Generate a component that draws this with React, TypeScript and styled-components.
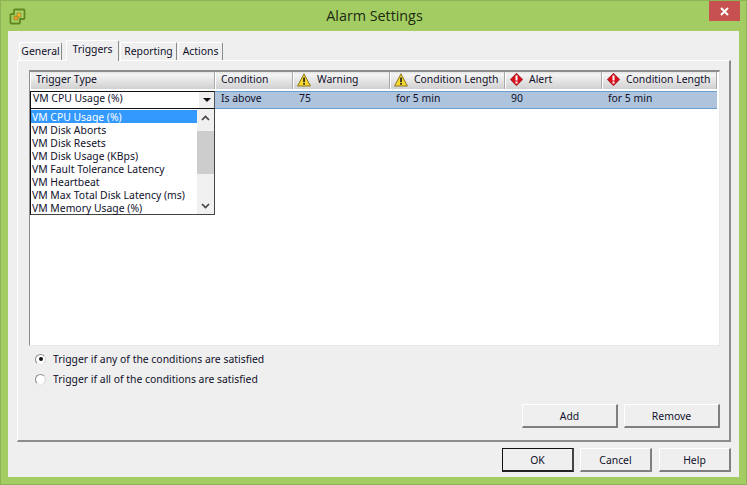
import React from 'react';
import styled, { createGlobalStyle } from 'styled-components';

const GlobalStyle = createGlobalStyle`
    html, body {
        margin: 0;
        padding: 0;
        background: #a3cd62;
    }
    * {
        box-sizing: border-box;
    }
`;

const triggerTypes = [
    'VM CPU Usage (%)',
    'VM Disk Aborts',
    'VM Disk Resets',
    'VM Disk Usage (KBps)',
    'VM Fault Tolerance Latency',
    'VM Heartbeat',
    'VM Max Total Disk Latency (ms)',
    'VM Memory Usage (%)',
];

const columns = [
    { label: 'Trigger Type', width: 185, value: '', icon: null },
    { label: 'Condition', width: 78, value: 'Is above', icon: null },
    { label: 'Warning', width: 97, value: '75', icon: 'warn' },
    { label: 'Condition Length', width: 115, value: 'for 5 min', icon: 'warn' },
    { label: 'Alert', width: 97, value: '90', icon: 'alert' },
    { label: 'Condition Length', width: 115, value: 'for 5 min', icon: 'alert' },
];

const AppLogo = () => (
    <svg width="17" height="17" viewBox="0 0 17 17">
        <path d="M6 1.500h8.500a1 1 0 0 1 1 1V10a1 1 0 0 1-1 1H11v3.500a1 1 0 0 1-1 1H2.500a1 1 0 0 1-1-1V7a1 1 0 0 1 1-1H5V2.500a1 1 0 0 1 1-1z" fill="#a9d268" stroke="#5f8a22" strokeWidth="1.800" />
        <rect x="5" y="8" width="4" height="4" fill="#e8a020" stroke="#8a7a20" strokeWidth="0.600" />
        <rect x="8" y="5" width="4" height="4" fill="#f0b030" stroke="#8a7a20" strokeWidth="0.600" />
    </svg>
);

const WarnIcon = () => (
    <svg width="14" height="14" viewBox="0 0 14 14">
        <path d="M7 0.800 13.400 13H0.600z" fill="#f6d92e" stroke="#8a7420" strokeWidth="1" strokeLinejoin="round" />
        <rect x="6.200" y="4.500" width="1.700" height="4.700" fill="#222" />
        <rect x="6.200" y="10" width="1.700" height="1.700" fill="#222" />
    </svg>
);

const AlertIcon = () => (
    <svg width="13" height="13" viewBox="0 0 13 13">
        <path d="M6.500 0.300 12.700 6.500 6.500 12.700 0.300 6.500z" fill="#d8101c" stroke="#900810" strokeWidth="0.700" />
        <rect x="5.500" y="2.500" width="2" height="5" fill="#fff" />
        <rect x="5.500" y="8.500" width="2" height="2" fill="#fff" />
    </svg>
);

const Chevron = ({ up }: { up?: boolean }) => (
    <svg width="9" height="6" viewBox="0 0 9 6">
        <path d={up ? 'M1 5 4.500 1.500 8 5' : 'M1 1 4.500 4.500 8 1'} fill="none" stroke="#444" strokeWidth="1.700" />
    </svg>
);

const App: React.FC = () => {
    return (
        <Window>
            <GlobalStyle />
            <TitleBar>
                <LogoSlot>
                    <AppLogo />
                </LogoSlot>
                <Title>Alarm Settings</Title>
                <CloseButton>
                    <svg width="9" height="9" viewBox="0 0 9 9">
                        <path d="M1 1 8 8M8 1 1 8" stroke="#fff" strokeWidth="2" />
                    </svg>
                </CloseButton>
            </TitleBar>
            <Client>
                <TabStrip>
                    <Tab $width={43}>General</Tab>
                    <Tab $width={53} $active>Triggers</Tab>
                    <Tab $width={57}>Reporting</Tab>
                    <Tab $width={45}>Actions</Tab>
                </TabStrip>
                <TabPanel>
                    <TableFrame>
                        <HeaderRow>
                            {columns.map((col, i) => (
                                <HeaderCell key={i} $width={col.width} $icon={col.icon}>
                                    {col.icon === 'warn' && <WarnIcon />}
                                    {col.icon === 'alert' && <AlertIcon />}
                                    <HeaderLabel $hasIcon={!!col.icon}>{col.label}</HeaderLabel>
                                </HeaderCell>
                            ))}
                        </HeaderRow>
                        <DataRow>
                            <Combo>
                                <ComboText>VM CPU Usage (%)</ComboText>
                                <ComboArrow />
                            </Combo>
                            {columns.slice(1).map((col, i) => (
                                <DataCell key={i} $width={col.width}>{col.value}</DataCell>
                            ))}
                        </DataRow>
                        <Dropdown>
                            <ItemList>
                                {triggerTypes.map((item, i) => (
                                    <Item key={item} $selected={i === 0}>{item}</Item>
                                ))}
                            </ItemList>
                            <ScrollBar>
                                <ScrollEnd><Chevron up /></ScrollEnd>
                                <ScrollTrack>
                                    <ScrollThumb />
                                </ScrollTrack>
                                <ScrollEnd><Chevron /></ScrollEnd>
                            </ScrollBar>
                        </Dropdown>
                    </TableFrame>
                    <RadioGroup>
                        <RadioRow>
                            <Radio $checked />
                            <RadioLabel>Trigger if any of the conditions are satisfied</RadioLabel>
                        </RadioRow>
                        <RadioRow>
                            <Radio />
                            <RadioLabel>Trigger if all of the conditions are satisfied</RadioLabel>
                        </RadioRow>
                    </RadioGroup>
                    <PanelButtons>
                        <DialogButton $width={96}>Add</DialogButton>
                        <DialogButton $width={96}>Remove</DialogButton>
                    </PanelButtons>
                </TabPanel>
                <DialogButtons>
                    <DialogButton $width={72} $default>OK</DialogButton>
                    <DialogButton $width={72}>Cancel</DialogButton>
                    <DialogButton $width={72}>Help</DialogButton>
                </DialogButtons>
            </Client>
        </Window>
    );
};

export default App;

const uiFont = `"Noto Sans", "DejaVu Sans", sans-serif`;

const Window = styled.div`
    width: 747px;
    height: 485px;
    background: #a3cd62;
    border: 1px solid #8eb356;
    padding: 0 7px 7px;
    display: flex;
    flex-direction: column;
    font-family: ${uiFont};
    font-size: 10.400px;
    color: #10102a;
    overflow: hidden;
`;

const TitleBar = styled.div`
    height: 30px;
    flex-shrink: 0;
    display: flex;
    align-items: flex-start;
    justify-content: space-between;
`;

const LogoSlot = styled.div`
    padding: 7px 0 0 1px;
    display: flex;
`;

const Title = styled.div`
    flex: 1;
    text-align: center;
    padding: 5px 0 0 14px;
    font-family: "Open Sans", "Noto Sans", sans-serif;
    font-size: 14.300px;
    color: #1c2a10;
`;

const CloseButton = styled.div`
    width: 31px;
    height: 20px;
    margin-right: -1px;
    background: #c75050;
    display: flex;
    align-items: center;
    justify-content: center;
`;

const Client = styled.div`
    flex: 1;
    background: #efefef;
    padding: 9px 8px 5px 9px;
    display: flex;
    flex-direction: column;
`;

const TabStrip = styled.div`
    height: 20px;
    display: flex;
    align-items: flex-end;
    padding-left: 2px;
    flex-shrink: 0;
    position: relative;
    z-index: 1;
`;

const Tab = styled.div<{ $width: number; $active?: boolean }>`
    width: ${(p) => p.$width}px;
    height: ${(p) => (p.$active ? 21 : 18)}px;
    margin: ${(p) => (p.$active ? '0 1px 0 3px' : '0 1px 0 0')};
    margin-bottom: ${(p) => (p.$active ? -1 : 0)}px;
    background: #efefef;
    border-top: 1px solid #fff;
    border-left: 1px solid #fff;
    border-right: 1px solid #8a8a8a;
    border-radius: 2px 2px 0 0;
    display: flex;
    align-items: center;
    justify-content: center;
    padding-bottom: ${(p) => (p.$active ? 5 : 2)}px;
`;

const TabPanel = styled.div`
    height: 382px;
    flex-shrink: 0;
    border-top: 1px solid #fff;
    border-left: 1px solid #fff;
    border-right: 2px solid #8c8c8c;
    border-bottom: 2px solid #8c8c8c;
    padding: 9px 9px 0 11px;
    display: flex;
    flex-direction: column;
`;

const TableFrame = styled.div`
    height: 276px;
    flex-shrink: 0;
    background: #fff;
    border-top: 2px solid #8d8d8d;
    border-left: 1px solid #8d8d8d;
    border-right: 1px solid #e8e8e8;
    border-bottom: 1px solid #e8e8e8;
    position: relative;
`;

const HeaderRow = styled.div`
    height: 17px;
    display: flex;
    width: 687px;
`;

const headerPadding = (icon: string | null) => (icon === 'warn' ? 3 : icon === 'alert' ? 4 : 5);

const HeaderCell = styled.div<{ $width: number; $icon: string | null }>`
    width: ${(p) => p.$width}px;
    flex-shrink: 0;
    display: flex;
    align-items: center;
    padding-left: ${(p) => headerPadding(p.$icon)}px;
    background: linear-gradient(#e4e4e4, #f4f4f4 15%, #d0d0d0);
    border-right: 1px solid #a8a8a8;
    border-left: 1px solid #fff;
    white-space: nowrap;
    overflow: hidden;

    svg {
        flex-shrink: 0;
        margin-bottom: 2px;
    }
`;

const HeaderLabel = styled.span<{ $hasIcon: boolean }>`
    margin-left: ${(p) => (p.$hasIcon ? 6 : 0)}px;
    padding-bottom: 4px;
`;

const DataRow = styled.div`
    margin-top: 2px;
    height: 18px;
    width: 687px;
    display: flex;
    background: #aec4dd;
    border-top: 1px solid #6a9fcf;
    border-bottom: 1px solid #6a9fcf;
    align-items: center;
`;

const Combo = styled.div`
    width: 185px;
    height: 18px;
    flex-shrink: 0;
    background: #fff;
    border: 1px solid #111;
    border-right: 1px solid #555;
    display: flex;
    align-items: center;
`;

const ComboText = styled.span`
    flex: 1;
    padding-left: 2px;
    padding-bottom: 5px;
`;

const ComboArrow = styled.span`
    width: 15px;
    height: 100%;
    background: #efefef;
    display: flex;
    align-items: center;
    justify-content: center;

    &::after {
        content: '';
        border-left: 4px solid transparent;
        border-right: 4px solid transparent;
        border-top: 4px solid #111;
    }
`;

const DataCell = styled.div<{ $width: number }>`
    width: ${(p) => p.$width}px;
    flex-shrink: 0;
    padding-left: 6px;
    padding-bottom: 4px;
    white-space: nowrap;
`;

const Dropdown = styled.div`
    position: absolute;
    left: 0;
    top: 36px;
    width: 185px;
    height: 107px;
    background: #fff;
    border: 1px solid #111;
    border-right-color: #444;
    border-bottom-color: #444;
    display: flex;
`;

const ItemList = styled.div`
    flex: 1;
    padding-top: 1px;
`;

const Item = styled.div<{ $selected?: boolean }>`
    height: 13px;
    line-height: 15px;
    padding-left: 1px;
    white-space: nowrap;
    background: ${(p) => (p.$selected ? '#3399ff' : 'transparent')};
    color: ${(p) => (p.$selected ? '#fff' : '#10102a')};
`;

const ScrollBar = styled.div`
    width: 17px;
    background: #f0f0f0;
    display: flex;
    flex-direction: column;
`;

const ScrollEnd = styled.div`
    height: 17px;
    display: flex;
    align-items: center;
    justify-content: center;
    flex-shrink: 0;
`;

const ScrollTrack = styled.div`
    flex: 1;
    padding-top: 5px;
`;

const ScrollThumb = styled.div`
    height: 43px;
    background: #cdcdcd;
`;

const RadioGroup = styled.div`
    margin-top: 3px;
    padding-left: 6px;
    display: flex;
    flex-direction: column;
`;

const RadioRow = styled.div`
    height: 20px;
    display: flex;
    align-items: center;
    gap: 7px;
`;

const RadioLabel = styled.span`
    padding-bottom: 1px;
`;

const Radio = styled.span<{ $checked?: boolean }>`
    width: 11px;
    height: 11px;
    border-radius: 50%;
    background: #fff;
    border: 1px solid;
    border-color: #8a8a8a #d8d8d8 #e8e8e8 #8a8a8a;
    display: flex;
    align-items: center;
    justify-content: center;

    &::after {
        content: '';
        width: 4px;
        height: 4px;
        border-radius: 50%;
        background: ${(p) => (p.$checked ? '#111' : 'transparent')};
    }
`;

const PanelButtons = styled.div`
    margin-top: auto;
    margin-bottom: 12px;
    display: flex;
    justify-content: flex-end;
    gap: 6px;
`;

const DialogButton = styled.div<{ $width: number; $default?: boolean }>`
    width: ${(p) => p.$width}px;
    height: 24px;
    display: flex;
    align-items: center;
    justify-content: center;
    background: #efefef;
    border-style: solid;
    border-width: 1px 2px 2px 1px;
    border-color: ${(p) => (p.$default ? '#111 #444 #222 #111' : '#fff #7f7f7f #7f7f7f #fff')};
`;

const DialogButtons = styled.div`
    margin-top: 6px;
    display: flex;
    justify-content: flex-end;
    gap: 6px;

    & > :last-child {
        margin-left: 1px;
    }
`;
